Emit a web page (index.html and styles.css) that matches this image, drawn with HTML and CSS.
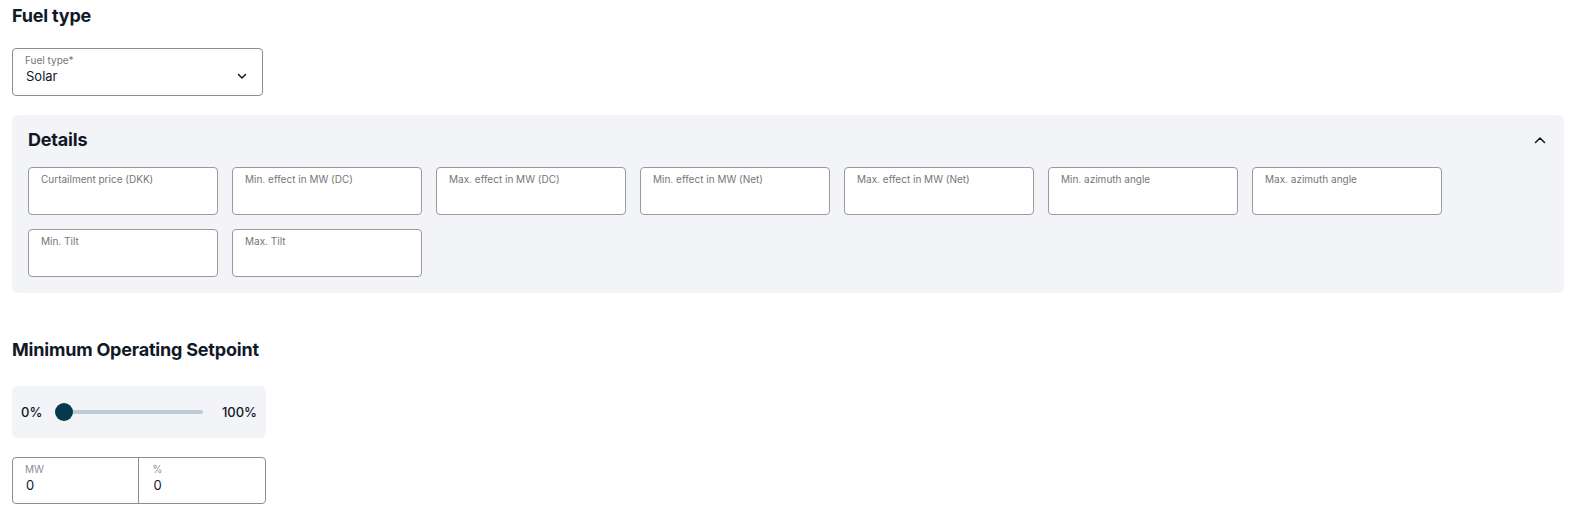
FILE: index.html
```html
<!DOCTYPE html>
<html lang="en">
<head>
    <meta charset="UTF-8">
    <meta name="viewport" content="width=device-width, initial-scale=1.0">
    <title>Fuel type</title>
    <link rel="stylesheet" href="styles.css">
</head>
<body>
    <div class="page">
        <h2 class="section-title">Fuel type</h2>

        <!-- Select for fuel type -->
        <div class="select-box">
            <span class="field-label">Fuel type*</span>
            <div class="select-value">
                <span>Solar</span>
                <svg class="chevron" width="12" height="12" viewBox="0 0 12 12">
                    <path d="M2.5 4.5 L6 8 L9.5 4.5" fill="none" stroke="#111827" stroke-width="1.5" stroke-linecap="round" stroke-linejoin="round"/>
                </svg>
            </div>
        </div>

        <!-- Details panel -->
        <div class="panel">
            <div class="panel-header">
                <h3 class="panel-title">Details</h3>
                <svg class="chevron" width="16" height="16" viewBox="0 0 16 16">
                    <path d="M3.5 10.5 L8 6 L12.5 10.5" fill="none" stroke="#111827" stroke-width="1.5" stroke-linecap="round" stroke-linejoin="round"/>
                </svg>
            </div>
            <div class="field-grid">
                <div class="text-field"><span class="field-label">Curtailment price (DKK)</span></div>
                <div class="text-field"><span class="field-label">Min. effect in MW (DC)</span></div>
                <div class="text-field"><span class="field-label">Max. effect in MW (DC)</span></div>
                <div class="text-field"><span class="field-label">Min. effect in MW (Net)</span></div>
                <div class="text-field"><span class="field-label">Max. effect in MW (Net)</span></div>
                <div class="text-field"><span class="field-label">Min. azimuth angle</span></div>
                <div class="text-field"><span class="field-label">Max. azimuth angle</span></div>
                <div class="text-field"><span class="field-label">Min. Tilt</span></div>
                <div class="text-field"><span class="field-label">Max. Tilt</span></div>
            </div>
        </div>

        <h2 class="section-title setpoint-title">Minimum Operating Setpoint</h2>

        <!-- Slider -->
        <div class="range-box">
            <span class="range-text">0%</span>
            <div class="range-slider">
                <div class="range-track"></div>
                <div class="range-thumb"></div>
            </div>
            <span class="range-text">100%</span>
        </div>

        <!-- MW / % inputs -->
        <div class="split-box">
            <div class="split-cell">
                <span class="field-label">MW</span>
                <span class="split-value">0</span>
            </div>
            <div class="split-cell">
                <span class="field-label">%</span>
                <span class="split-value">0</span>
            </div>
        </div>
    </div>
</body>
</html>
```

FILE: styles.css
```css
/* General */
body {
    margin: 0;
    font-family: Inter, "Noto Sans", sans-serif;
    color: #111827;
    background-color: #ffffff;
}

.page {
    padding: 4px 12px 0 12px;
}

/* Titles */
.section-title {
    margin: 0;
    font-size: 18px;
    line-height: 24px;
    font-weight: 700;
    letter-spacing: -0.2px;
}

.setpoint-title {
    margin-top: 45px;
}

/* Labels */
.field-label {
    display: block;
    font-size: 10px;
    line-height: 12px;
    color: #767676;
}

/* Fuel type select */
.select-box {
    box-sizing: border-box;
    width: 251px;
    height: 48px;
    margin-top: 20px;
    padding: 5px 14px 0 12px;
    border: 1px solid #8e8e8e;
    border-radius: 4px;
}

.select-value {
    display: flex;
    justify-content: space-between;
    align-items: center;
    margin-top: 2px;
    font-size: 13px;
    line-height: 16px;
}

.select-value span {
    padding-left: 1px;
}

.chevron {
    display: block;
}

/* Details panel */
.panel {
    margin-top: 19px;
    padding: 13px 16px 16px 16px;
    background-color: #f3f4f7;
    border-radius: 6px;
}

.panel-header {
    display: flex;
    justify-content: space-between;
    align-items: center;
}

.panel-title {
    margin: 0;
    font-size: 18px;
    line-height: 24px;
    font-weight: 700;
    letter-spacing: -0.2px;
}

.field-grid {
    display: flex;
    flex-wrap: wrap;
    gap: 14px;
    margin-top: 15px;
}

.text-field {
    box-sizing: border-box;
    width: 190px;
    height: 48px;
    padding: 5px 12px 0 12px;
    background-color: #ffffff;
    border: 1px solid #9a9a9a;
    border-radius: 4px;
}

/* Slider */
.range-box {
    box-sizing: border-box;
    display: flex;
    align-items: center;
    width: 254px;
    height: 52px;
    margin-top: 24px;
    padding: 0 9px;
    background-color: #f3f4f7;
    border-radius: 6px;
}

.range-text {
    font-size: 13px;
    font-weight: 500;
}

.range-slider {
    position: relative;
    flex: 1;
    height: 18px;
    margin: 0 19px 0 13px;
}

.range-track {
    position: absolute;
    left: 9px;
    right: 0;
    top: 7px;
    height: 4px;
    border-radius: 2px;
    background-color: #bccad2;
}

.range-thumb {
    position: absolute;
    left: 0;
    top: 0;
    width: 18px;
    height: 18px;
    border-radius: 50%;
    background-color: #053a4d;
}

/* MW and percent */
.split-box {
    box-sizing: border-box;
    display: flex;
    width: 254px;
    height: 47px;
    margin-top: 19px;
    border: 1px solid #8e8e8e;
    border-radius: 4px;
}

.split-cell {
    flex: 1;
    padding: 5px 12px 0 12px;
}

.split-cell + .split-cell {
    border-left: 1px solid #8e8e8e;
    padding-left: 14px;
}

.split-cell .field-label {
    color: #8a8f98;
}

.split-value {
    display: block;
    margin-top: 2px;
    font-size: 13px;
    line-height: 16px;
    padding-left: 1px;
}
```
